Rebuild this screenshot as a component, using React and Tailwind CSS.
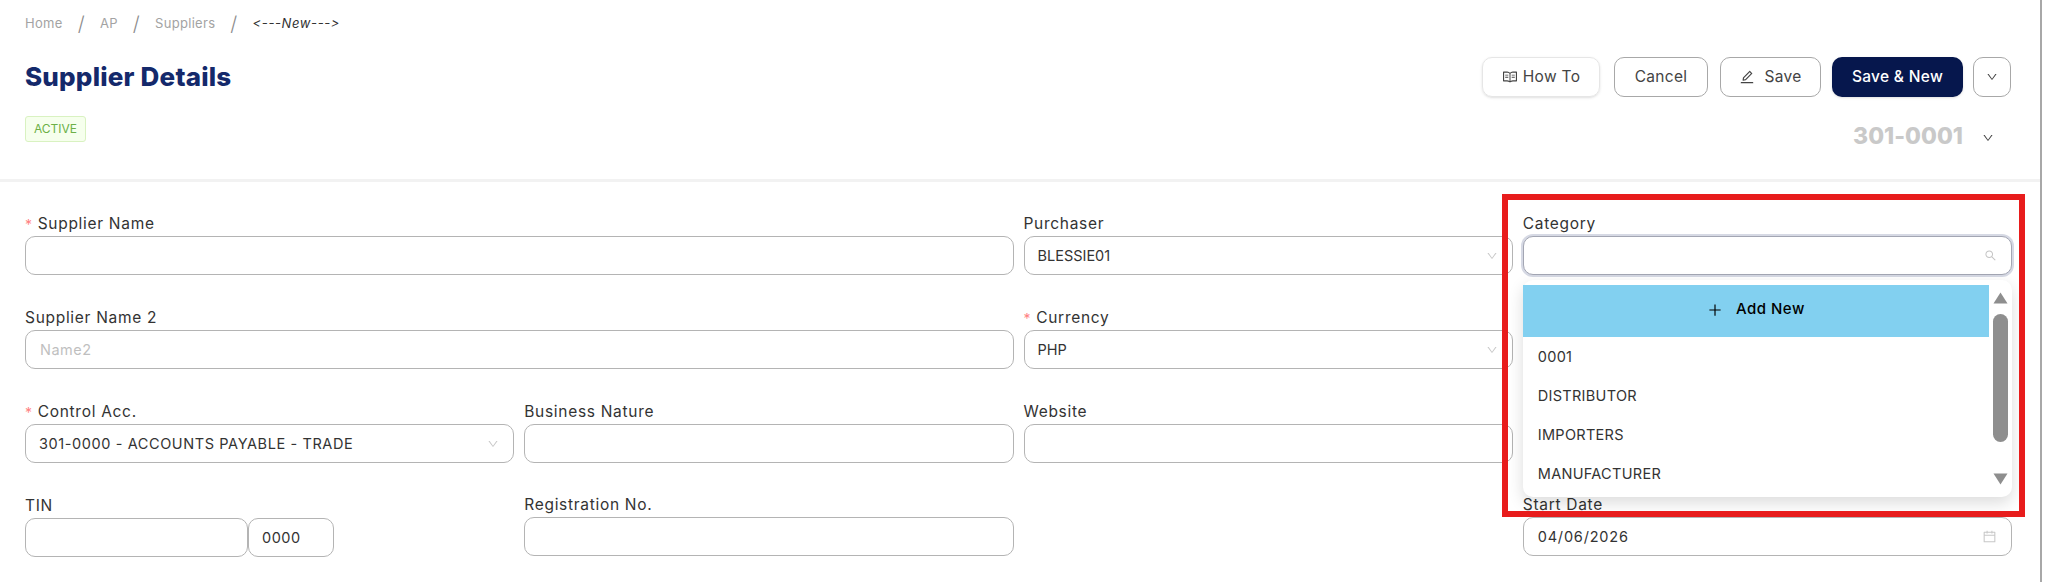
import React from "react";
import {
  AiOutlineRead,
  AiOutlineEdit,
  AiOutlineDown,
  AiOutlineSearch,
  AiOutlineCalendar,
  AiOutlinePlus,
} from "react-icons/ai";

const boxClass =
  "flex h-[39px] items-center rounded-[10px] border border-[#b4b4b4] bg-white px-[14px] text-[14.5px] text-[#333] outline-none placeholder:text-[#bfbfbf]";

const Label = ({ text, required }) => (
  <label className="flex h-[22px] items-center pb-[3px] text-[15.5px] leading-none tracking-[0.7px] text-[#333]">
    {required && <span className="mr-[5px] mt-[3px] text-[14px] text-[#ff7f82]">*</span>}
    {text}
  </label>
);

const TextField = ({ label, required, placeholder, value, className = "" }) => (
  <div className={className}>
    <Label text={label} required={required} />
    <input
      className={`${boxClass} w-full tracking-[0.5px]`}
      placeholder={placeholder}
      defaultValue={value}
      readOnly
    />
  </div>
);

const SelectField = ({ label, required, value, spacing = "tracking-[0px]" }) => (
  <div>
    <Label text={label} required={required} />
    <div className={`${boxClass} w-full justify-between pl-[13px]`}>
      <span className={spacing}>{value}</span>
      <AiOutlineDown className="text-[12px] text-[#c8c8c8]" />
    </div>
  </div>
);

const categories = ["0001", "DISTRIBUTOR", "IMPORTERS", "MANUFACTURER"];

const CategoryField = () => (
  <div className="relative">
    <Label text="Category" />
    <div className="flex h-[39px] items-center justify-end rounded-[10px] border border-[#a3a6b3] bg-white px-[14px] shadow-[0_0_0_2px_#d6d9e4]">
      <AiOutlineSearch className="text-[13px] text-[#c4c4c4]" />
    </div>

    <div className="absolute left-0 right-0 top-[66px] z-10 flex h-[217px] rounded-[10px] bg-white pt-[5px] shadow-[0_6px_16px_rgba(0,0,0,0.14)]">
      <div className="flex-1">
        <div className="flex h-[52px] items-center justify-center gap-[13px] bg-[#82d0f0] pb-[3px] text-[15px] font-medium tracking-[0.5px] text-black">
          <AiOutlinePlus className="text-[16px]" />
          <span>Add New</span>
        </div>
        {categories.map((item) => (
          <div
            key={item}
            className="flex h-[39px] items-center pl-[15px] text-[14.5px] tracking-[0.3px] text-[#333]"
          >
            {item}
          </div>
        ))}
      </div>
      <div className="flex w-[23px] flex-col items-center pr-[1px] pt-[7px]">
        <svg width="15" height="12" viewBox="0 0 15 12">
          <path d="M7.5 0.5 14.5 11.5H0.5Z" fill="#8e8e8e" />
        </svg>
        <div className="mt-[10px] h-[128px] w-[15px] rounded-full bg-[#8e8e8e]" />
        <svg className="mt-[31px]" width="15" height="12" viewBox="0 0 15 12">
          <path d="M7.5 11.5 14.5 0.5H0.5Z" fill="#8e8e8e" />
        </svg>
      </div>
    </div>
  </div>
);

const Slash = () => <span className="mx-[15px] text-[20px] font-light text-[#8c8c8c]">/</span>;

const App = () => {
  return (
    <div className="relative h-[582px] w-[2048px] overflow-hidden bg-white font-['Inter',sans-serif] [font-variant-ligatures:no-contextual]">
      <main className="h-[582px] w-[2042px] border-r-2 border-[#a8a8a8]">
        {/* header */}
        <header className="h-[182px] border-b-[3px] border-[#f2f2f2] pl-[25px] pr-[29px] pt-[14px]">
          <nav className="flex h-[20px] items-center text-[13px] tracking-[0.3px] text-[#a3a3a3]">
            <span>Home</span>
            <Slash />
            <span>AP</span>
            <Slash />
            <span>Suppliers</span>
            <Slash />
            <span className="italic tracking-[0.6px] text-[#333]">&lt;---New---&gt;</span>
          </nav>

          <div className="mt-[23px] flex h-[40px] items-center justify-between">
            <h1 className="pb-[2px] text-[26px] font-extrabold tracking-[0.2px] text-[#14296b]">Supplier Details</h1>
            <div className="flex items-center text-[15.5px] tracking-[0.3px] text-[#444]">
              <button className="flex h-[40px] w-[118px] items-center justify-center gap-[5px] rounded-[10px] border border-[#e6e6e6] shadow-sm">
                <AiOutlineRead className="text-[16px]" />
                How To
              </button>
              <button className="ml-[14px] h-[40px] w-[94px] rounded-[10px] border border-[#a8a8a8]">
                Cancel
              </button>
              <button className="ml-[12px] flex h-[40px] w-[101px] items-center justify-center gap-[9px] rounded-[10px] border border-[#a8a8a8]">
                <AiOutlineEdit className="text-[16px]" />
                Save
              </button>
              <button className="ml-[11px] h-[40px] w-[131px] rounded-[10px] bg-[#06174d] font-medium text-white shadow-sm">
                Save &amp; New
              </button>
              <button className="ml-[10px] flex h-[40px] w-[38px] items-center justify-center rounded-[10px] border border-[#a8a8a8]">
                <AiOutlineDown className="text-[12px]" />
              </button>
            </div>
          </div>

          <div className="mt-[19px] flex items-start justify-between">
            <span className="flex h-[26px] w-[61px] items-center justify-center rounded-[3px] border border-[#d9f2c1] bg-[#f6ffed] text-[12px] text-[#6cb047]">
              ACTIVE
            </span>
            <div className="flex items-center">
              <span className="text-[23px] font-extrabold leading-[40px] text-[#c9c9c9]">301-0001</span>
              <AiOutlineDown className="ml-[19px] mr-[17px] mt-[4px] text-[12px] text-[#444]" />
            </div>
          </div>
        </header>

        {/* form */}
        <section className="grid grid-cols-4 gap-x-[10px] gap-y-[33px] pl-[25px] pr-[28px] pt-[32px]">
          <TextField label="Supplier Name" required className="col-span-2" />
          <SelectField label="Purchaser" value="BLESSIE01" />
          <CategoryField />

          <TextField label="Supplier Name 2" placeholder="Name2" className="col-span-2" />
          <SelectField label="Currency" required value="PHP" />
          <div />

          <SelectField
            label="Control Acc."
            required
            value="301-0000 - ACCOUNTS PAYABLE - TRADE"
            spacing="tracking-[0.6px]"
          />
          <TextField label="Business Nature" />
          <TextField label="Website" />
          <div />

          <div>
            <Label text="TIN" />
            <div className="flex">
              <input className={`${boxClass} w-[223px]`} readOnly />
              <input className={`${boxClass} w-[86px] pl-[13px] tracking-[0.5px]`} defaultValue="0000" readOnly />
            </div>
          </div>
          <TextField label="Registration No." className="-mt-[1px]" />
          <div />
          <div className="-mt-[1px]">
            <Label text="Start Date" />
            <div className={`${boxClass} w-full justify-between`}>
              <span className="tracking-[0.8px]">04/06/2026</span>
              <AiOutlineCalendar className="text-[15px] text-[#c8c8c8]" />
            </div>
          </div>
        </section>
      </main>

      {/* red highlight drawn over the screenshot */}
      <div className="pointer-events-none absolute left-[1502px] top-[194px] z-20 h-[323px] w-[523px] border-[6px] border-[#e81c1c]" />
    </div>
  );
};

export default App;
